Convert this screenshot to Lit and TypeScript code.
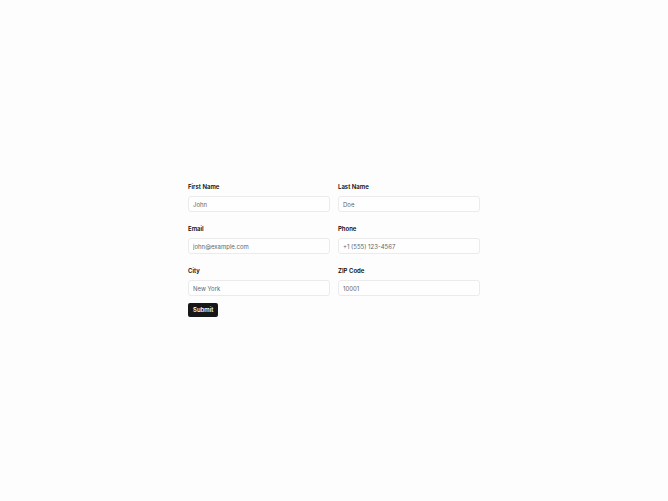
/**
 * @file Contact form laid out in two columns
 */

import { html, css, LitElement } from "lit";
import { customElement } from "lit/decorators.js";

interface Field {
  id: string;
  label: string;
  type: string;
  placeholder: string;
}

const fields: Field[] = [
  { id: "first-name", label: "First Name", type: "text", placeholder: "John" },
  { id: "last-name", label: "Last Name", type: "text", placeholder: "Doe" },
  { id: "email", label: "Email", type: "email", placeholder: "john@example.com" },
  { id: "phone", label: "Phone", type: "tel", placeholder: "+1 (555) 123-4567" },
  { id: "city", label: "City", type: "text", placeholder: "New York" },
  { id: "zip", label: "ZIP Code", type: "text", placeholder: "10001" },
];

@customElement("app-root")
export class AppRoot extends LitElement {
  static styles = css`
    :host {
      background: #fdfdfd;
      box-sizing: border-box;
      color: #0a0a0a;
      display: grid;
      font-family: Inter, "Liberation Sans", sans-serif;
      min-block-size: 100vh;
      padding: 16px;
      place-items: center;
    }

    * {
      box-sizing: border-box;
    }

    .form {
      display: grid;
      gap: 7px;
      inline-size: 100%;
      justify-items: start;
      max-inline-size: 292px;
    }

    .form__fields {
      column-gap: 8px;
      display: grid;
      grid-template-columns: repeat(2, minmax(0, 1fr));
      inline-size: 100%;
      row-gap: 14px;
    }

    .field {
      display: grid;
      gap: 6px;
    }

    .field__label {
      font-size: 6px;
      font-weight: 600;
      line-height: 6px;
    }

    .field__input {
      background: #fefefe;
      block-size: 16px;
      border: 1px solid #ebebeb;
      border-radius: 3px;
      color: inherit;
      font: 400 6px/8px Inter, "Liberation Sans", sans-serif;
      inline-size: 100%;
      min-inline-size: 0;
      padding: 0 4px;
    }

    .field__input::placeholder {
      color: #666666;
      opacity: 1;
    }

    .form__submit {
      background: #171717;
      block-size: 14px;
      border: 0;
      border-radius: 2px;
      color: #fafafa;
      cursor: pointer;
      font: 600 6px/8px Inter, "Liberation Sans", sans-serif;
      padding: 0 5px;
    }
  `;

  _onSubmit(event: Event) {
    event.preventDefault();
  }

  _renderField(field: Field) {
    return html`
      <div class="field">
        <label class="field__label" for=${field.id}>${field.label}</label>
        <input
          class="field__input"
          id=${field.id}
          name=${field.id}
          type=${field.type}
          placeholder=${field.placeholder} />
      </div>
    `;
  }

  render() {
    return html`
      <form class="form" @submit=${this._onSubmit}>
        <div class="form__fields">${fields.map((field) => this._renderField(field))}</div>
        <button class="form__submit" type="submit">Submit</button>
      </form>
    `;
  }
}
